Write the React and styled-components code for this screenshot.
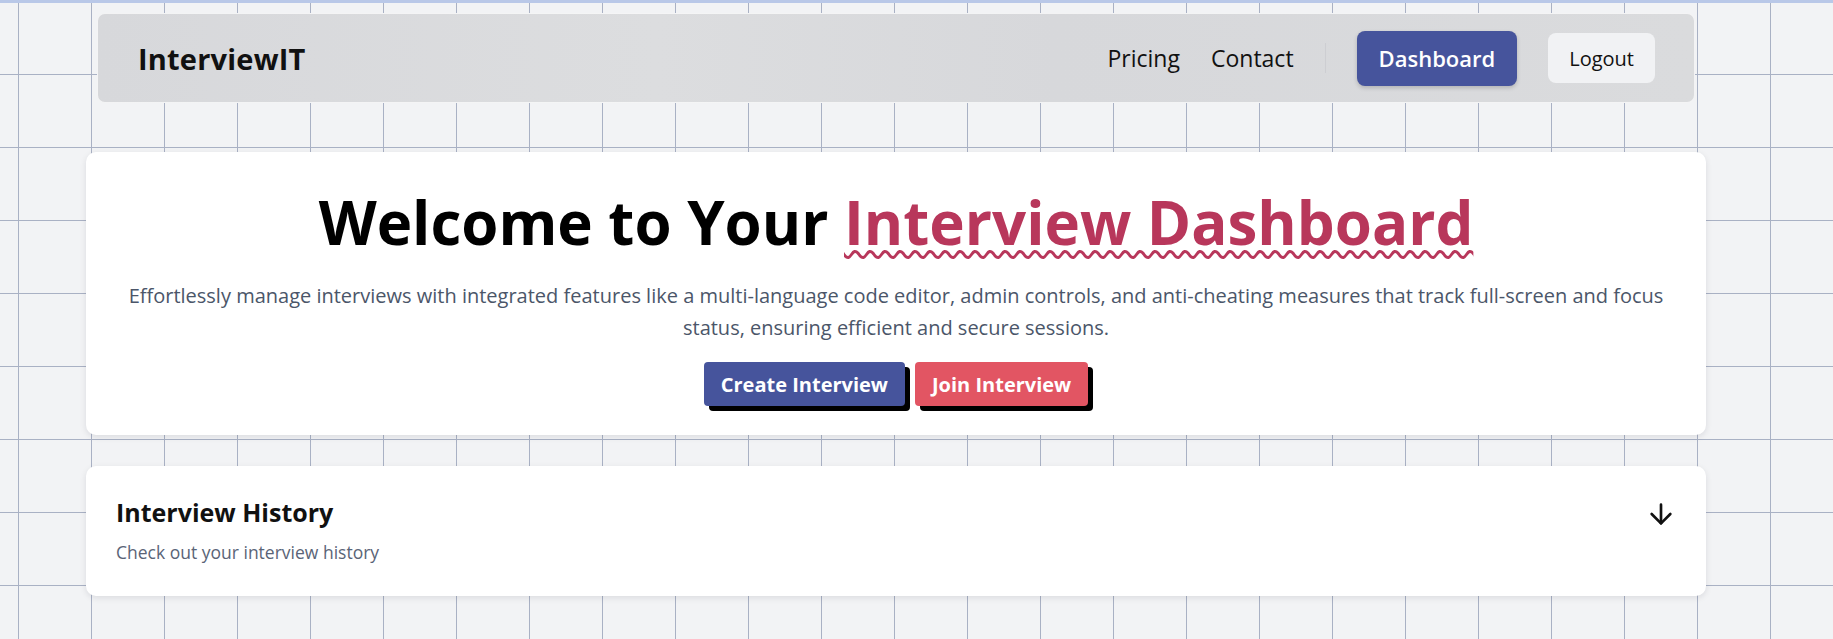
import React from 'react';
import styled, { createGlobalStyle } from 'styled-components';
import { ArrowDown } from 'lucide-react';

const GlobalStyle = createGlobalStyle`
  html, body, #root {
    margin: 0;
    min-height: 100%;
  }

  body {
    font-family: 'Open Sans', 'Noto Sans', sans-serif;
    background-color: #f2f3f5;
    background-image:
      linear-gradient(to right, #a9b1c4 1px, transparent 1px),
      linear-gradient(to bottom, #a9b1c4 1px, transparent 1px);
    background-size: 73px 73px;
    background-position: 18px 1px;
    border-top: 3px solid #b9c8e8;
    box-sizing: border-box;
    min-height: 100vh;
  }

  * {
    box-sizing: border-box;
  }
`;

const Shell = styled.div`
  width: 1620px;
  margin-left: 86px;
  padding-top: 10px;
  display: flex;
  flex-direction: column;
`;

const NavBar = styled.nav`
  margin: 0 11px;
  height: 90px;
  padding: 0 39px 0 40px;
  display: flex;
  align-items: center;
  justify-content: space-between;
  border-radius: 8px;
  border: 1px solid rgba(255, 255, 255, 0.7);
  background: linear-gradient(90deg, #d7d8db 0%, #dcdddf 35%, #d7d8db 60%, #dadbdd 100%);
`;

const Brand = styled.div`
  font-size: 29px;
  font-weight: 700;
  color: #111;
  letter-spacing: 0.2px;
`;

const NavLinks = styled.div`
  display: flex;
  align-items: center;
  gap: 31px;
`;

const NavLink = styled.a`
  font-size: 23px;
  color: #111;
  text-decoration: none;
`;

const Divider = styled.span`
  width: 1px;
  height: 30px;
  background: #cdced2;
`;

const DashboardButton = styled.button`
  height: 55px;
  padding: 0 22px;
  border: none;
  border-radius: 8px;
  background: #46549c;
  color: #fff;
  font-family: inherit;
  font-size: 22px;
  font-weight: 600;
  box-shadow: 0 2px 4px rgba(0, 0, 0, 0.18);
`;

const LogoutButton = styled.button`
  height: 50px;
  padding: 0 21px;
  border: none;
  border-radius: 8px;
  background: #f1f2f4;
  color: #111;
  font-family: inherit;
  font-size: 20px;
`;

const Card = styled.section`
  background: #fff;
  border-radius: 10px;
  box-shadow: 0 2px 6px rgba(15, 23, 42, 0.1);
`;

const Hero = styled(Card)`
  margin-top: 49px;
  padding: 34px 32px 29px;
  display: flex;
  flex-direction: column;
  align-items: center;
  text-align: center;
`;

const Title = styled.h1`
  margin: 0;
  font-size: 60px;
  line-height: 72px;
  font-weight: 700;
  color: #000;
`;

const Highlight = styled.span`
  color: #b8375b;
  text-decoration: underline wavy #b8375b;
  text-decoration-thickness: 3px;
  text-underline-offset: 5px;
`;

const Lead = styled.p`
  margin: 22px 0 0;
  font-size: 20px;
  line-height: 32px;
  color: #4b5669;
`;

const Actions = styled.div`
  margin-top: 18px;
  display: flex;
  gap: 10px;
`;

const ActionButton = styled.button`
  height: 44px;
  padding: 0 17px;
  border: none;
  border-radius: 4px;
  background: ${props => (props.$variant === 'join' ? '#e25563' : '#46549c')};
  color: #fff;
  font-family: inherit;
  font-size: 20px;
  font-weight: 700;
  box-shadow: 5px 5px 0 #000;
`;

const HistoryCard = styled(Card)`
  margin-top: 31px;
  height: 130px;
  padding: 28px 29px 0 30px;
  display: flex;
  justify-content: space-between;
  align-items: flex-start;
`;

const HistoryText = styled.div`
  display: flex;
  flex-direction: column;
`;

const HistoryTitle = styled.h2`
  margin: 0;
  font-size: 25px;
  line-height: 36px;
  font-weight: 700;
  color: #111;
`;

const HistorySub = styled.p`
  margin: 10px 0 0;
  font-size: 17.5px;
  line-height: 24px;
  color: #5a6477;
`;

const ToggleButton = styled.button`
  margin-top: 4px;
  padding: 0;
  border: none;
  background: none;
  color: #111;
  display: flex;
`;

export default function App() {
  return (
    <>
      <GlobalStyle />
      <Shell>
        <NavBar>
          <Brand>InterviewIT</Brand>
          <NavLinks>
            <NavLink href="#">Pricing</NavLink>
            <NavLink href="#">Contact</NavLink>
            <Divider />
            <DashboardButton>Dashboard</DashboardButton>
            <LogoutButton>Logout</LogoutButton>
          </NavLinks>
        </NavBar>

        <Hero>
          <Title>
            Welcome to Your <Highlight>Interview Dashboard</Highlight>
          </Title>
          <Lead>
            Effortlessly manage interviews with integrated features like a multi-language code editor, admin
            controls, and anti-cheating measures that track full-screen and focus status, ensuring efficient and
            secure sessions.
          </Lead>
          <Actions>
            <ActionButton>Create Interview</ActionButton>
            <ActionButton $variant="join">Join Interview</ActionButton>
          </Actions>
        </Hero>

        <HistoryCard>
          <HistoryText>
            <HistoryTitle>Interview History</HistoryTitle>
            <HistorySub>Check out your interview history</HistorySub>
          </HistoryText>
          <ToggleButton aria-label="Toggle history">
            <ArrowDown size={32} strokeWidth={2} />
          </ToggleButton>
        </HistoryCard>
      </Shell>
    </>
  );
}
